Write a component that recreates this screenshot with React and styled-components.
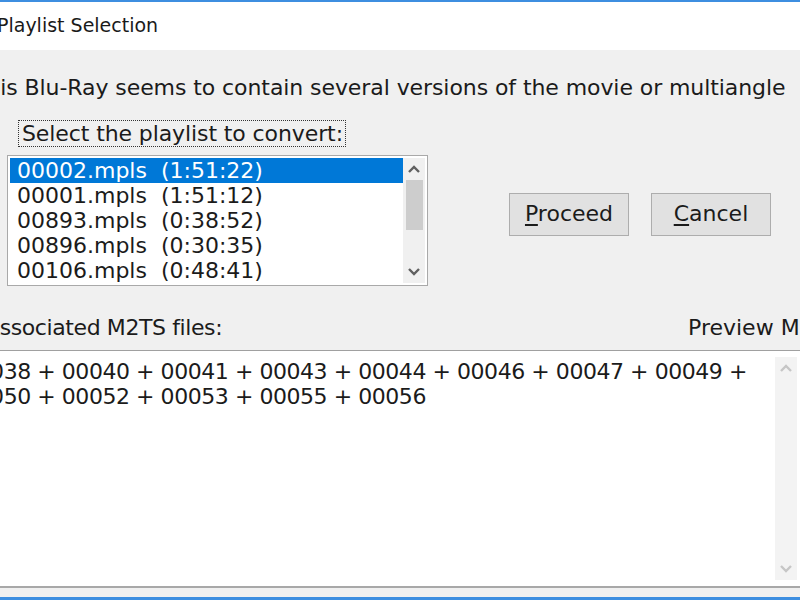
import React from 'react';
import styled, { createGlobalStyle } from 'styled-components';

const GlobalStyle = createGlobalStyle`
  html, body {
    margin: 0;
    padding: 0;
    width: 800px;
    height: 600px;
    overflow: hidden;
    background: #f0f0f0;
  }
  body {
    font-family: "DejaVu Sans", Verdana, sans-serif;
    font-size: 22px;
    color: #1b1b1b;
  }
`;

const playlists = [
  { name: '00002.mpls', time: '1:51:22' },
  { name: '00001.mpls', time: '1:51:12' },
  { name: '00893.mpls', time: '0:38:52' },
  { name: '00896.mpls', time: '0:30:35' },
  { name: '00106.mpls', time: '0:48:41' },
];

const Chevron = ({ up, color }) => (
  <svg width="12" height="8" viewBox="0 0 12 8">
    <polyline
      points={up ? '1,7 6,2 11,7' : '1,1 6,6 11,1'}
      fill="none"
      stroke={color}
      strokeWidth="2.4"
    />
  </svg>
);

function App() {
  return (
    <>
      <GlobalStyle />
      <Window>
        <TopEdge />
        <TitleBar>Playlist Selection</TitleBar>
        <Body>
          <Message>This Blu-Ray seems to contain several versions of the movie or multiangle</Message>
          <FocusLabel>Select the playlist to convert:</FocusLabel>

          <ListRow>
            <ListBox>
              <Items>
                {playlists.map((p, i) => (
                  <Item key={p.name} selected={i === 0}>
                    {p.name}&nbsp;&nbsp;({p.time})
                  </Item>
                ))}
              </Items>
              <ScrollBar>
                <Arrow><Chevron up color="#606060" /></Arrow>
                <Thumb />
                <Track />
                <Arrow><Chevron color="#606060" /></Arrow>
              </ScrollBar>
            </ListBox>

            <Buttons>
              <Button><u>P</u>roceed</Button>
              <Button><u>C</u>ancel</Button>
            </Buttons>
          </ListRow>

          <LabelRow>
            <Label shift={15} tight>Associated M2TS files:</Label>
            <Label>Preview M2TS</Label>
          </LabelRow>

          <TextBox>
            <TextContent>
              <div>00038 + 00040 + 00041 + 00043 + 00044 + 00046 + 00047 + 00049 +</div>
              <div>00050 + 00052 + 00053 + 00055 + 00056</div>
            </TextContent>
            <TextScroll>
              <Arrow><Chevron up color="#c6c6c6" /></Arrow>
              <Track />
              <Arrow><Chevron color="#c6c6c6" /></Arrow>
            </TextScroll>
          </TextBox>
          <BottomGap />
          <BottomEdge />
        </Body>
      </Window>
    </>
  );
}

export default App;

//Window frame
const Window = styled.div`
  width: 800px;
  height: 600px;
  display: flex;
  flex-direction: column;
  overflow: hidden;
`;

const TopEdge = styled.div`
  height: 2px;
  background: #3d8ee0;
`;

const TitleBar = styled.div`
  height: 48px;
  background: #ffffff;
  display: flex;
  align-items: center;
  margin-left: -3px;
  padding-bottom: 2px;
  box-sizing: border-box;
  font-size: 19px;
  color: #1a1a1a;
  white-space: nowrap;
`;

const Body = styled.div`
  flex: 1;
  display: flex;
  flex-direction: column;
  background: #f0f0f0;
`;

const Message = styled.div`
  margin-top: 26px;
  line-height: 24px;
  letter-spacing: -0.08px;
  white-space: nowrap;
  margin-left: -27px;
`;

const FocusLabel = styled.div`
  align-self: flex-start;
  margin: 20px 0 0 18px;
  height: 27px;
  box-sizing: border-box;
  border: 1px dotted #333;
  padding: 0 2px 0 3px;
  line-height: 25px;
  letter-spacing: -0.1px;
  white-space: nowrap;
`;

//Playlist list and buttons
const ListRow = styled.div`
  display: flex;
  align-items: flex-start;
  margin-top: 8px;
`;

const ListBox = styled.div`
  margin-left: 7px;
  width: 421px;
  height: 131px;
  box-sizing: border-box;
  border: 1px solid #a9a9a9;
  padding: 2px;
  background: #ffffff;
  display: flex;
`;

const Items = styled.div`
  flex: 1;
  overflow: hidden;
`;

const Item = styled.div`
  height: 25px;
  line-height: 25px;
  padding-left: 7px;
  white-space: nowrap;
  background: ${p => (p.selected ? '#0078d7' : 'transparent')};
  color: ${p => (p.selected ? '#ffffff' : '#1b1b1b')};
`;

const ScrollBar = styled.div`
  width: 22px;
  display: flex;
  flex-direction: column;
  align-items: center;
  background: #f0f0f0;
`;

const Arrow = styled.div`
  height: 22px;
  width: 100%;
  display: flex;
  align-items: center;
  justify-content: center;
`;

const Thumb = styled.div`
  width: 17px;
  height: 50px;
  background: #cdcdcd;
`;

const Track = styled.div`
  flex: 1;
`;

const Buttons = styled.div`
  display: flex;
  gap: 22px;
  margin: 38px 0 0 81px;
`;

const Button = styled.button`
  width: 120px;
  height: 43px;
  box-sizing: border-box;
  border: 1px solid #adadad;
  background: #e1e1e1;
  font-family: inherit;
  font-size: 22px;
  color: #1b1b1b;
  padding: 0 0 2px;
  u {
    text-decoration-thickness: 2px;
    text-underline-offset: 3px;
  }
`;

//Associated files
const LabelRow = styled.div`
  display: grid;
  grid-template-columns: 688px 1fr;
  margin-top: 30px;
  height: 24px;
  line-height: 24px;
  white-space: nowrap;
`;

const Label = styled.div`
  margin-left: ${p => (p.shift ? -p.shift : 0)}px;
  letter-spacing: ${p => (p.tight ? '-0.4px' : 'normal')};
`;

const TextBox = styled.div`
  margin-top: 10px;
  height: 238px;
  box-sizing: border-box;
  border-top: 1px solid #a0a0a0;
  border-bottom: 2px solid #a8a8a8;
  background: #ffffff;
  display: flex;
`;

const TextContent = styled.div`
  flex: 1;
  padding-top: 8px;
  margin-left: -37px;
  line-height: 25px;
  letter-spacing: -0.45px;
  white-space: nowrap;
  overflow: hidden;
`;

const TextScroll = styled.div`
  width: 22px;
  margin: 6px 3px 6px 0;
  display: flex;
  flex-direction: column;
  background: #f3f3f3;
`;

const BottomGap = styled.div`
  height: 9px;
`;

const BottomEdge = styled.div`
  height: 3px;
  background: #3d8ee0;
`;
